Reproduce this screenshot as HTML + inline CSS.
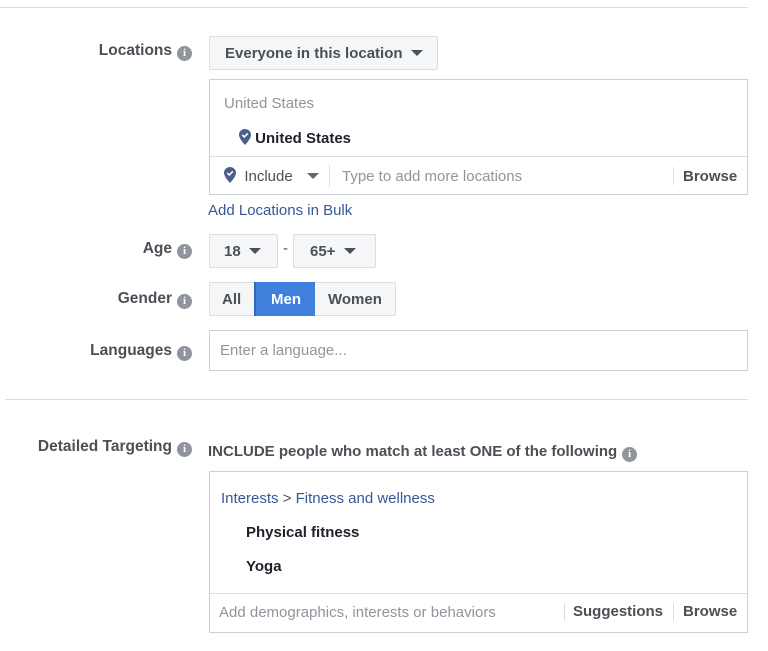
<!DOCTYPE html>
<html><head><meta charset="utf-8"><style>
*{box-sizing:border-box;margin:0;padding:0}
body{width:768px;height:651px;background:#fff;font-family:"Liberation Sans",Arial,sans-serif;position:relative;overflow:hidden;color:#1d2129}
.a{position:absolute}
.lbl{position:absolute;font-weight:bold;font-size:15.5px;color:#4b4f56;text-align:right;white-space:nowrap}
.i{display:inline-block;width:15px;height:15px;border-radius:50%;background:#90949c;color:#fff;font-size:11px;line-height:15px;text-align:center;font-weight:bold;font-family:"Liberation Serif",serif;vertical-align:-1px;margin-left:5px}
.btn{position:absolute;background:#f5f6f7;border:1px solid #dadde1;border-radius:2px;font-weight:bold;font-size:15px;color:#4b4f56;white-space:nowrap}
.tri{display:inline-block;width:0;height:0;border-left:6px solid transparent;border-right:6px solid transparent;border-top:6px solid #4b4f56;vertical-align:2px}
.box{position:absolute;border:1px solid #ccd0d5;background:#fff}
.pin{display:inline-block;vertical-align:-2px}
</style></head><body>
<div class="a" style="left:0;top:7px;width:748px;height:1px;background:#dadde1"></div>
<div class="a" style="left:5px;top:399px;width:743px;height:1px;background:#dadde1"></div>

<div class="lbl" style="right:576px;top:42px">Locations<span class="i">i</span></div>
<div class="btn" style="left:209px;top:36px;width:229px;height:34px;padding:8px 0 0 15px">Everyone in this location &nbsp;<span class="tri"></span></div>

<div class="box" style="left:209px;top:79px;width:539px;height:116px"></div>
<div class="a" style="left:210px;top:156px;width:537px;height:1px;background:#dadde1"></div>
<div class="a" style="left:224px;top:95px;font-size:15px;color:#90949c">United States</div>
<div class="a" style="left:239px;top:129px;font-size:15px;font-weight:bold"><svg class="pin" width="12" height="16" viewBox="0 0 12 16"><path d="M6 0C2.7 0 0 2.6 0 5.8 0 10 6 16 6 16s6-6 6-10.2C12 2.6 9.3 0 6 0z" fill="#4b5f8a"/><path d="M3.3 6l2 2 3.5-3.6" stroke="#fff" stroke-width="1.6" fill="none"/></svg>&nbsp;United States</div>
<div class="a" style="left:224px;top:167px;font-size:15px;color:#4b4f56"><svg class="pin" width="12" height="16" viewBox="0 0 12 16"><path d="M6 0C2.7 0 0 2.6 0 5.8 0 10 6 16 6 16s6-6 6-10.2C12 2.6 9.3 0 6 0z" fill="#4b5f8a"/><path d="M3.3 6l2 2 3.5-3.6" stroke="#fff" stroke-width="1.6" fill="none"/></svg>&nbsp; Include</div>
<div class="a" style="left:307px;top:168px"><span class="tri" style="border-top-color:#606770"></span></div>
<div class="a" style="left:329px;top:165px;width:1px;height:22px;background:#dadde1"></div>
<div class="a" style="left:342px;top:168px;font-size:15px;color:#90949c">Type to add more locations</div>
<div class="a" style="left:673px;top:167px;width:1px;height:18px;background:#dadde1"></div>
<div class="a" style="left:683px;top:168px;font-size:15px;font-weight:bold;color:#4b4f56">Browse</div>
<div class="a" style="left:208px;top:202px;font-size:15px;color:#365899">Add Locations in Bulk</div>

<div class="lbl" style="right:576px;top:240px">Age<span class="i">i</span></div>
<div class="btn" style="left:209px;top:234px;width:69px;height:34px;padding:8px 0 0 14px">18 &nbsp;<span class="tri"></span></div>
<div class="a" style="left:283px;top:240px;font-size:15px;color:#4b4f56">-</div>
<div class="btn" style="left:293px;top:234px;width:83px;height:34px;padding:8px 0 0 16px">65+ &nbsp;<span class="tri"></span></div>

<div class="lbl" style="right:576px;top:290px">Gender<span class="i">i</span></div>
<div class="btn" style="left:209px;top:282px;width:187px;height:34px"></div>
<div class="a" style="left:222px;top:291px;font-size:15px;font-weight:bold;color:#4b4f56">All</div>
<div class="a" style="left:254px;top:282px;width:61px;height:34px;background:#4080dd;color:#fff;font-weight:bold;font-size:15px;padding:9px 0 0 15px;border-left:2px solid #3066bf">Men</div>
<div class="a" style="left:328px;top:291px;font-size:15px;font-weight:bold;color:#4b4f56">Women</div>

<div class="lbl" style="right:576px;top:342px">Languages<span class="i">i</span></div>
<div class="box" style="left:209px;top:330px;width:539px;height:41px;padding:11px 0 0 10px;font-size:15px;color:#90949c">Enter a language...</div>

<div class="lbl" style="right:576px;top:438px">Detailed Targeting<span class="i">i</span></div>
<div class="a" style="left:208px;top:443px;font-size:15px;font-weight:bold;color:#4b4f56">INCLUDE people who match at least ONE of the following<span class="i">i</span></div>

<div class="box" style="left:209px;top:471px;width:539px;height:162px"></div>
<div class="a" style="left:210px;top:593px;width:537px;height:1px;background:#dadde1"></div>
<div class="a" style="left:221px;top:490px;font-size:15px;color:#365899">Interests <span style="color:#4b4f56">&gt;</span> Fitness and wellness</div>
<div class="a" style="left:246px;top:524px;font-size:15px;font-weight:bold">Physical fitness</div>
<div class="a" style="left:246px;top:558px;font-size:15px;font-weight:bold">Yoga</div>
<div class="a" style="left:219px;top:604px;font-size:15px;color:#90949c">Add demographics, interests or behaviors</div>
<div class="a" style="left:564px;top:603px;width:1px;height:18px;background:#dadde1"></div>
<div class="a" style="left:573px;top:603px;font-size:15px;font-weight:bold;color:#4b4f56">Suggestions</div>
<div class="a" style="left:673px;top:603px;width:1px;height:18px;background:#dadde1"></div>
<div class="a" style="left:683px;top:603px;font-size:15px;font-weight:bold;color:#4b4f56">Browse</div>
</body></html>
